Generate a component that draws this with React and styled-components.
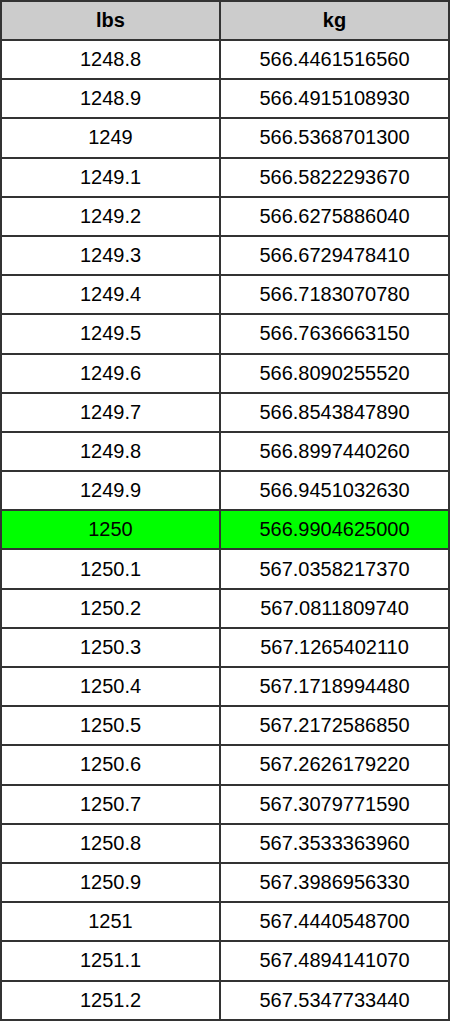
import React from "react";
import styled, { createGlobalStyle } from "styled-components";

const GlobalStyle = createGlobalStyle`
  body {
    margin: 0;
    background: #ffffff;
    font-family: "Liberation Sans", Arial, sans-serif;
  }
`;

const Table = styled.table`
  width: 450px;
  border-collapse: collapse;
  table-layout: fixed;
  font-size: 20px;
  color: #000000;
`;

const HeadCell = styled.th`
  height: 37px;
  padding: 0;
  background: #cccccc;
  border: 2px solid #333333;
  font-weight: 700;
  text-align: center;
`;

const Cell = styled.td`
  height: 37.2px;
  padding: 0;
  border: 2px solid #333333;
  text-align: center;
  background: ${(p) => (p.$hl ? "#00ff00" : "#ffffff")};
`;

const rows = [
  ["1248.8", "566.4461516560"],
  ["1248.9", "566.4915108930"],
  ["1249", "566.5368701300"],
  ["1249.1", "566.5822293670"],
  ["1249.2", "566.6275886040"],
  ["1249.3", "566.6729478410"],
  ["1249.4", "566.7183070780"],
  ["1249.5", "566.7636663150"],
  ["1249.6", "566.8090255520"],
  ["1249.7", "566.8543847890"],
  ["1249.8", "566.8997440260"],
  ["1249.9", "566.9451032630"],
  ["1250", "566.9904625000"],
  ["1250.1", "567.0358217370"],
  ["1250.2", "567.0811809740"],
  ["1250.3", "567.1265402110"],
  ["1250.4", "567.1718994480"],
  ["1250.5", "567.2172586850"],
  ["1250.6", "567.2626179220"],
  ["1250.7", "567.3079771590"],
  ["1250.8", "567.3533363960"],
  ["1250.9", "567.3986956330"],
  ["1251", "567.4440548700"],
  ["1251.1", "567.4894141070"],
  ["1251.2", "567.5347733440"],
];

export default function App() {
  return (
    <>
      <GlobalStyle />
      <Table>
        <colgroup>
          <col style={{ width: "219px" }} />
          <col />
        </colgroup>
        <thead>
          <tr>
            <HeadCell>lbs</HeadCell>
            <HeadCell>kg</HeadCell>
          </tr>
        </thead>
        <tbody>
          {rows.map(([lbs, kg]) => (
            <tr key={lbs}>
              <Cell $hl={lbs === "1250"}>{lbs}</Cell>
              <Cell $hl={lbs === "1250"}>{kg}</Cell>
            </tr>
          ))}
        </tbody>
      </Table>
    </>
  );
}
